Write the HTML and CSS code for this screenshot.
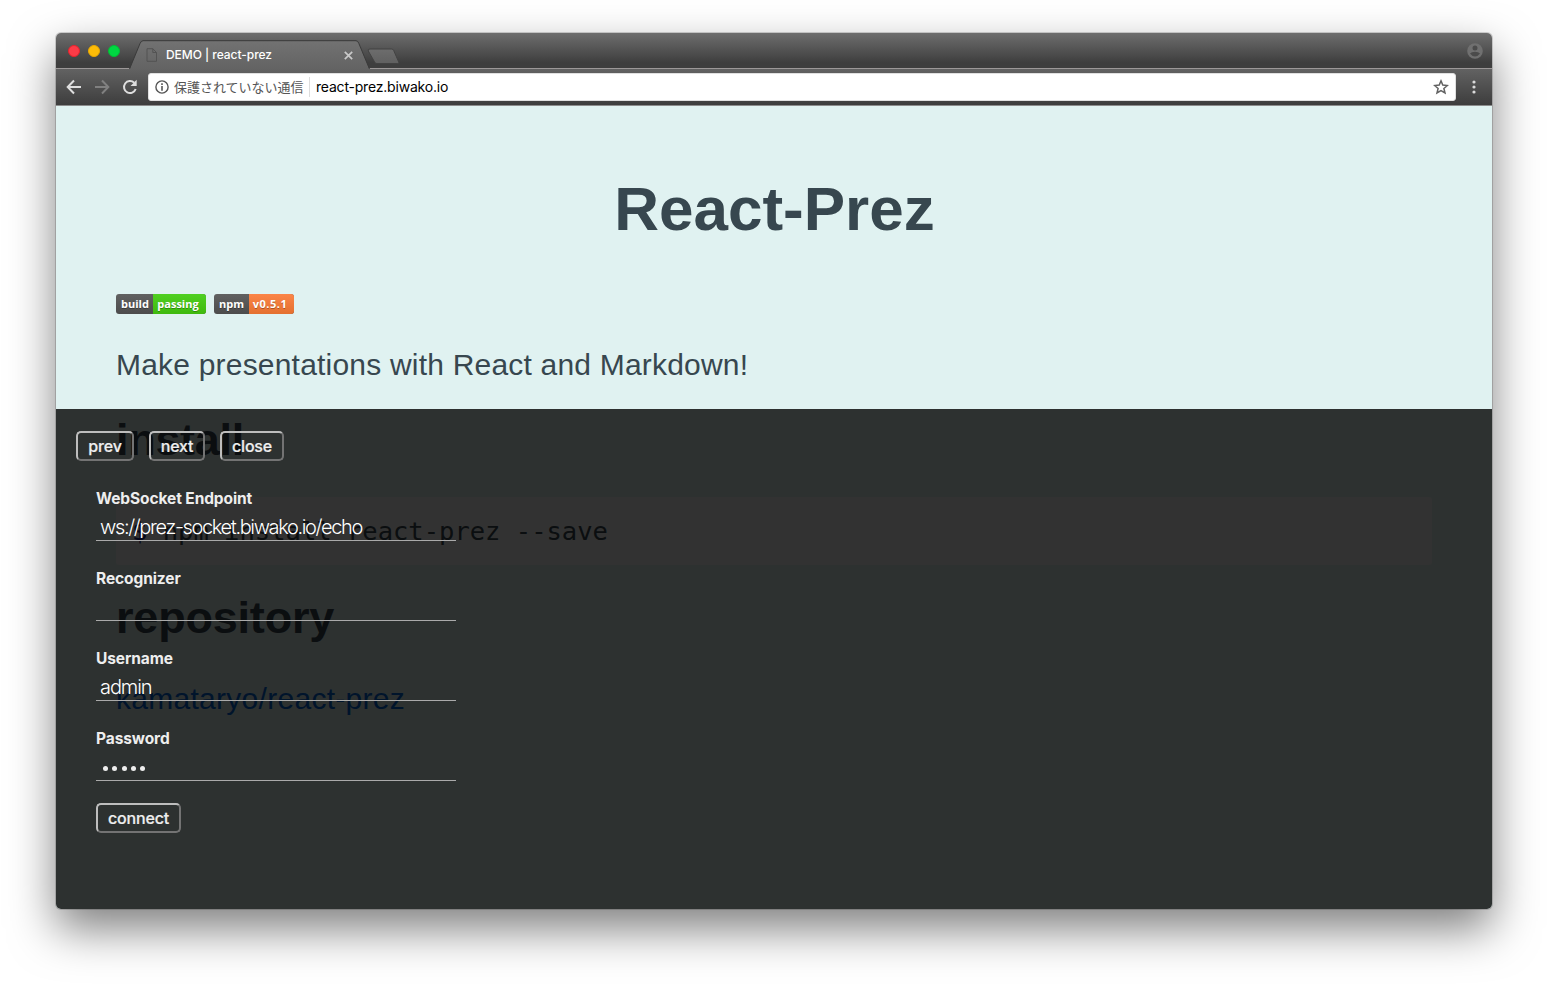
FILE: index.html
```html
<!DOCTYPE html>
<html lang="ja">
<head>
<meta charset="utf-8">
<title>DEMO | react-prez</title>
<link rel="stylesheet" href="styles.css">
</head>
<body>
<div class="window">
  <header class="titlebar">
    <div class="lights"><i class="light red"></i><i class="light yellow"></i><i class="light green"></i></div>
    <div class="tab">
      <svg class="tab-shape" width="272" height="30" viewBox="0 0 272 30">
        <defs><linearGradient id="tabfill" x1="0" y1="0" x2="0" y2="1"><stop offset="0" stop-color="#727272"/><stop offset="1" stop-color="#636363"/></linearGradient>
        <linearGradient id="newfill" x1="0" y1="0" x2="0" y2="1"><stop offset="0" stop-color="#6d6d6d"/><stop offset="1" stop-color="#606060"/></linearGradient></defs>
        <path d="M0.5 29.5 L11 3.5 Q12.2 0.9 14 0.9 H227 Q228.8 0.9 229.8 3.3 L240.5 29.5Z" fill="url(#tabfill)"/>
        <path d="M0.5 29 L11 3.5 Q12.2 0.7 14 0.7 H227 Q228.8 0.7 229.8 3.3 L240.5 29" fill="none" stroke="#3b3b3b"/>
        <path d="M241 9 H262.5 Q264 9 264.7 10.5 L269.8 22.3 Q270 23.6 268.7 23.6 H248 Q246.4 23.6 245.6 22 L239.3 11 Q238.5 9 241 9Z" fill="url(#newfill)" stroke="#424242"/>
      </svg>
      <svg class="doc" width="12" height="14" viewBox="0 0 12 14" fill="none" stroke="#535353"><path d="M1 .7H6.8L10.5 4.5V13.3H1ZM6.8 .7V4.5H10.5"/></svg>
      <span class="tab-title">DEMO | react-prez</span>
      <svg class="tab-close" width="9" height="9" viewBox="0 0 9 9" stroke="#c9c9c9" stroke-width="1.7"><path d="M.8 .8L8.2 8.2M8.2 .8L.8 8.2"/></svg>
    </div>
    <svg class="profile" width="16" height="16" viewBox="0 0 16 16"><circle cx="8" cy="8" r="7.8" fill="#707070"/><circle cx="8" cy="5.1" r="2.5" fill="#4b4b4b"/><path d="M3 10.6Q4.5 8.8 8 8.8T13 10.6Q11.2 13.4 8 13.4T3 10.6Z" fill="#4b4b4b"/></svg>
  </header>
  <nav class="toolbar">
    <svg class="back" width="16" height="16" viewBox="0 0 16 16" fill="none" stroke="#dedede" stroke-width="2"><path d="M15 8H2.2M8 1.5L1.7 8L8 14.5"/></svg>
    <svg class="forward" width="16" height="16" viewBox="0 0 16 16" fill="none" stroke="#808080" stroke-width="2"><path d="M1 8H13.8M8 1.5L14.3 8L8 14.5"/></svg>
    <svg class="reload" width="16" height="16" viewBox="0 0 16 16"><path d="M13.7 10A6 6 0 1 1 12.2 3.7" fill="none" stroke="#dedede" stroke-width="2"/><path d="M14.7 .8V7H8.5Z" fill="#dedede"/></svg>
    <div class="address">
      <svg width="14" height="14" viewBox="0 0 14 14"><circle cx="7" cy="7" r="6.1" fill="none" stroke="#555" stroke-width="1.4"/><path d="M7 6.1V10.7M7 3.3V4.9" stroke="#555" stroke-width="1.6"/></svg>
      <span class="security">保護されていない通信</span>
      <span class="url">react-prez.biwako.io</span>
      <svg class="star" width="16" height="16" viewBox="0 0 16 16" fill="none" stroke="#626262" stroke-width="1.5"><path d="M8 1.9L9.8 6.1L14.4 6.5L10.9 9.5L12 14L8 11.6L4 14L5.1 9.5L1.6 6.5L6.2 6.1Z"/></svg>
    </div>
    <svg class="menu" width="4" height="14" viewBox="0 0 4 14" fill="#dadada"><circle cx="2" cy="2" r="1.6"/><circle cx="2" cy="7" r="1.6"/><circle cx="2" cy="12" r="1.6"/></svg>
  </nav>
  <main class="page">
    <article class="slide">
      <h1><span>React-Prez</span></h1>
      <div class="badges">
        <span class="badge build"><b>build</b><b class="green-part">passing</b></span>
        <span class="badge npm"><b>npm</b><b class="orange-part">v0.5.1</b></span>
      </div>
      <p class="lead">Make presentations with React and Markdown!</p>
      <h2>install</h2>
      <pre><span class="prompt">$</span> npm install react-prez --save</pre>
      <h2 class="repo">repository</h2>
      <p class="link"><a>kamataryo/react-prez</a></p>
    </article>
    <section class="panel">
      <div class="controls"><button class="prev">prev</button><button class="next">next</button><button class="close">close</button></div>
      <form class="form">
        <div class="field"><label>WebSocket Endpoint</label><div class="value ws">ws://prez-socket.biwako.io/echo</div></div>
        <div class="field"><label>Recognizer</label><div class="value"></div></div>
        <div class="field"><label>Username</label><div class="value">admin</div></div>
        <div class="field"><label>Password</label><div class="value dots"><i></i><i></i><i></i><i></i><i></i></div></div>
        <button type="button" class="connect">connect</button>
      </form>
    </section>
  </main>
</div>
</body>
</html>
```

FILE: styles.css
```css
* { box-sizing: border-box; }
body { margin: 0; background: #fff; padding: 33px 56px 80px; height: 989px; overflow: hidden; font-family: "Liberation Sans", Arial, sans-serif; }
svg { display: block; flex: none; }
.window { width: 1436px; height: 876px; border-radius: 5px; overflow: hidden; display: flex; flex-direction: column; box-shadow: 0 0 0 1px rgba(0,0,0,.16), 0 20px 46px rgba(0,0,0,.5); }

.titlebar { height: 36px; flex: none; display: flex; background: linear-gradient(#6e6e6e, #3e3e3e 85%, #3e3e3e); border-bottom: 1px solid #9c9898; padding: 0 9px 0 12px; }
.lights { display: flex; gap: 8px; padding-top: 12px; width: 61px; }
.light { width: 12px; height: 12px; border-radius: 50%; }
.red { background: #fc3b47; border: 1px solid #e9222c; }
.yellow { background: #fdbc08; border: 1px solid #e9a800; }
.green { background: #00d742; border: 1px solid #00bf35; }
.tab { position: relative; width: 240px; height: 36px; display: flex; align-items: center; padding: 8px 0 0 17px; }
.tab-shape { position: absolute; left: 0; top: 7px; }
.doc, .tab-title, .tab-close { position: relative; }
.tab-title { font: 500 12px/16px Inter, sans-serif; color: #fff; margin-left: 8px; width: 178px; letter-spacing: -.04px; white-space: nowrap; }
.profile { margin: 10px 0 0 auto; }

.toolbar { height: 37px; flex: none; display: flex; align-items: center; background: linear-gradient(#626262, #3d3d3d); border-bottom: 1px solid #8c8c8c; padding: 0 16px 0 10px; }
.forward { margin-left: 12px; }
.reload { margin-left: 12px; }
.address { width: 1308px; height: 28px; margin-left: 10px; background: #fff; border: 1px solid #e0e0e0; border-radius: 3px; display: flex; align-items: center; padding: 0 6px; }
.security { font: 13px/20px "Noto Sans CJK JP", sans-serif; color: #555; margin-left: 5px; width: 136px; border-right: 1px solid #ddd; white-space: nowrap; }
.url { font: 14px/20px Inter, sans-serif; color: #000; margin-left: 6px; letter-spacing: -.2px; }
.star { margin-left: auto; }
.menu { margin-left: 16px; }

.page { position: relative; flex: 1; overflow: hidden; background: #e0f2f1; }
.slide { padding: 68px 60px 0; color: #37474f; }
h1, h2, p, pre { margin: 0; }
h1 { font-size: 62px; line-height: 70px; text-align: center; padding-left: 1px; }
.badges { display: flex; gap: 8px; margin-top: 50px; }
.badge { display: flex; height: 20px; border-radius: 3px; overflow: hidden; color: #fff; text-shadow: 0 1px rgba(1,1,1,.3); background: linear-gradient(#616161, #4c4c4c); }
.badge b { text-align: center; font: 700 11px/20px "Open Sans", sans-serif; white-space: nowrap; }
.build b { width: 37px; padding-left: 1px; }
.build .green-part { width: 53px; padding: 0 3px 0 0; background: linear-gradient(#4fd021, #3fb90e); }
.npm b { width: 35px; }
.npm .orange-part { width: 45px; padding-right: 3px; background: linear-gradient(#fb8548, #e4702f); letter-spacing: .5px; }
.lead { margin-top: 28px; font-size: 30px; line-height: 45px; letter-spacing: .2px; }
h2 { margin-top: 26px; font-size: 45px; line-height: 54px; letter-spacing: -.3px; }
pre { margin-top: 30px; height: 68px; padding: 0 16px; border-radius: 3px; background: #f8fbf7; font: 25.5px/68px "DejaVu Sans Mono", monospace; }
.prompt { color: #1a237e; }
h2.repo { margin-top: 26px; letter-spacing: -.2px; }
.link { margin-top: 31px; font-size: 30px; line-height: 45px; letter-spacing: .28px; color: #0366d6; }

.panel { position: absolute; left: 0; right: 0; bottom: 0; height: 500px; background: rgba(0,0,0,.8); color: #eee; padding: 22px 20px; }
.controls { display: flex; gap: 15px; }
button { height: 30px; padding: 0; border: 2px solid; border-color: #bdbdbd #737373 #737373 #bdbdbd; border-radius: 5px; background: none; color: #eee; font: 500 16px/26px Inter, sans-serif; letter-spacing: -.2px; -webkit-text-stroke: .2px #eee; }
.prev { width: 58px; }
.next { width: 56px; }
.close { width: 64px; }
.form { margin: 27px 0 0 20px; width: 360px; }
.field { height: 80px; }
label { display: block; height: 22px; font: 700 15.5px/21px Inter, sans-serif; letter-spacing: -.05px; letter-spacing: -.1px; }
.value { height: 31px; border-bottom: 1px solid #aaa; padding: 0 4px; font: 300 20px/34px Inter, sans-serif; letter-spacing: -1.1px; color: #fff; white-space: nowrap; }
.ws { letter-spacing: -1.37px; }
.dots { display: flex; gap: 4.3px; padding: 16px 7px 0; }
.dots i { width: 5px; height: 5px; border-radius: 50%; background: #eee; }
.connect { display: block; width: 85px; margin-top: -5px; }
```
